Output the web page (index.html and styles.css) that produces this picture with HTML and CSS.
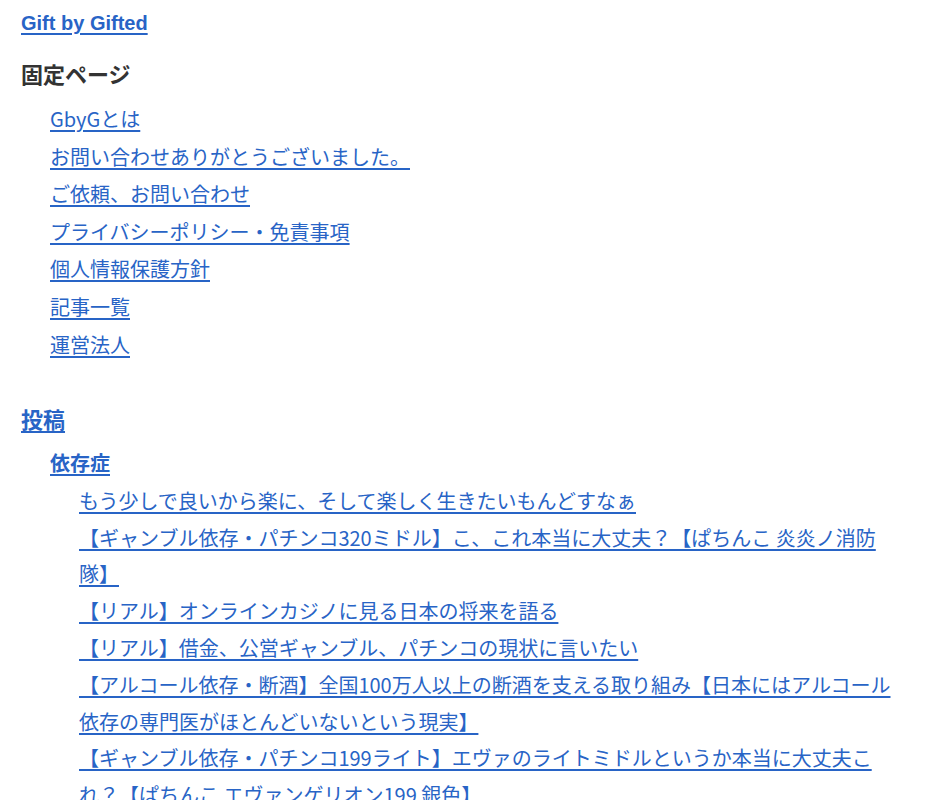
FILE: index.html
```html
<!DOCTYPE html>
<html lang="ja">
<head>
<meta charset="utf-8">
<title>Gift by Gifted - サイトマップ</title>
<link rel="stylesheet" href="styles.css">
</head>
<body>
<div class="page">
  <p class="site-title"><a href="#">Gift by Gifted</a></p>

  <h3 class="section-title">固定ページ</h3>
  <ul class="page-list">
    <li><a href="#">GbyGとは</a></li>
    <li><a href="#">お問い合わせありがとうございました。</a></li>
    <li><a href="#">ご依頼、お問い合わせ</a></li>
    <li><a href="#">プライバシーポリシー・免責事項</a></li>
    <li><a href="#">個人情報保護方針</a></li>
    <li><a href="#">記事一覧</a></li>
    <li><a href="#">運営法人</a></li>
  </ul>

  <h3 class="section-title section-link"><a href="#">投稿</a></h3>
  <ul class="cat-list">
    <li>
      <a class="cat-link" href="#">依存症</a>
      <ul class="post-list">
        <li><a href="#">もう少しで良いから楽に、そして楽しく生きたいもんどすなぁ</a></li>
        <li><a href="#">【ギャンブル依存・パチンコ320ミドル】こ、これ本当に大丈夫？【ぱちんこ 炎炎ノ消防隊】</a></li>
        <li><a href="#">【リアル】オンラインカジノに見る日本の将来を語る</a></li>
        <li><a href="#">【リアル】借金、公営ギャンブル、パチンコの現状に言いたい</a></li>
        <li><a href="#">【アルコール依存・断酒】全国100万人以上の断酒を支える取り組み【日本にはアルコール依存の専門医がほとんどいないという現実】</a></li>
        <li><a href="#">【ギャンブル依存・パチンコ199ライト】エヴァのライトミドルというか本当に大丈夫これ？【ぱちんこ エヴァンゲリオン199 銀色】</a></li>
      </ul>
    </li>
  </ul>
</div>
</body>
</html>
```

FILE: styles.css
```css
html, body {
  margin: 0;
  padding: 0;
  background: #ffffff;
}

body {
  font-family: "Noto Sans CJK JP", "Noto Sans", sans-serif;
  font-size: 20px;
  color: #333333;
}

a {
  color: #2864c6;
  text-decoration: underline;
  text-underline-offset: 3px;
}

.page {
  padding: 7px 36px 0 21px;
}

.site-title {
  margin: 0;
  line-height: 32px;
  font-family: "Liberation Sans", Arial, sans-serif;
  font-weight: bold;
  font-size: 20px;
}

.section-title {
  margin: 18px 0 0;
  font-size: 22px;
  font-weight: bold;
  line-height: 32px;
  color: #333333;
}

.page-list {
  list-style: none;
  margin: 11px 0 0;
  padding: 0 0 0 29px;
}

.page-list li {
  line-height: 37.6px;
}

.section-link {
  margin-top: 39px;
}

.cat-list {
  list-style: none;
  margin: 10.6px 0 0;
  padding: 0 0 0 29px;
}

.cat-list > li {
  line-height: 36.8px;
}

.cat-link {
  font-weight: bold;
  font-size: 20px;
}

.post-list {
  list-style: none;
  margin: 1.2px 0 0;
  padding: 0 0 0 29px;
}

.post-list li {
  line-height: 36.8px;
}
```
